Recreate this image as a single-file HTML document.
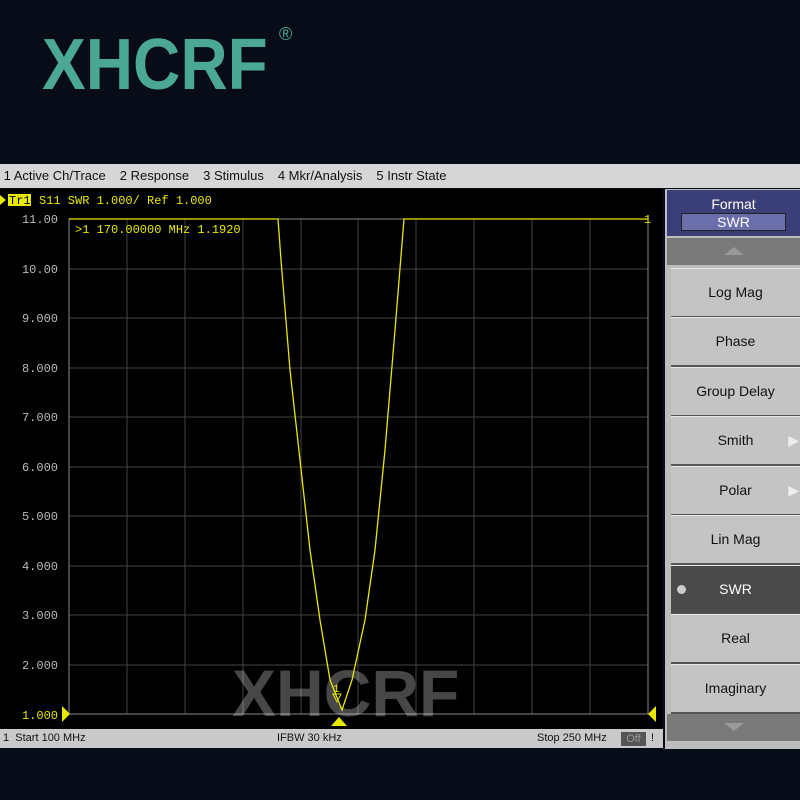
<!DOCTYPE html>
<html><head><style>
body{margin:0;width:800px;height:800px;background:#080c18;position:relative;overflow:hidden;font-family:"Liberation Sans",sans-serif}
.abs{position:absolute}
.logo{left:42px;top:22px;font-size:72px;font-weight:bold;color:#4aa894;transform:scaleX(.91);transform-origin:left top;line-height:86px}
.reg{left:279px;top:24px;font-size:18px;color:#4aa894}
.menu{left:0;top:164px;width:800px;height:24px;background:#d6d6d6;font-size:13px;color:#111;line-height:24px;white-space:nowrap}
.menu span{margin-right:14px}
.plot{left:0;top:189px;width:662px;height:540px;background:#000}
.status{left:0;top:729px;width:663px;height:19px;background:#c9c9c9;font-size:11px;line-height:19px;color:#111}
.panel{left:665px;top:189px;width:135px;height:560px;background:#bdbdbd}
.btn{position:absolute;left:6px;width:129px;height:47px;background:#c4c4c4;border-top:1px solid #e8e8e8;border-bottom:2px solid #555;font-size:14px;color:#111;text-align:center;line-height:47px}
.mono{font-family:"Liberation Mono",monospace}
</style></head><body>
<div class="abs logo">XHCRF</div>
<div class="abs reg">®</div>
<div class="abs menu">&nbsp;<span>1 Active Ch/Trace</span><span>2 Response</span><span>3 Stimulus</span><span>4 Mkr/Analysis</span><span>5 Instr State</span></div>
<div class="abs plot"></div>
<svg class="abs" style="left:0;top:189px" width="662" height="540" viewBox="0 189 662 540">
<g stroke="#444" stroke-width="1">
<line x1="69" y1="269" x2="648" y2="269"/><line x1="69" y1="318" x2="648" y2="318"/><line x1="69" y1="368" x2="648" y2="368"/><line x1="69" y1="417" x2="648" y2="417"/><line x1="69" y1="467" x2="648" y2="467"/><line x1="69" y1="516" x2="648" y2="516"/><line x1="69" y1="566" x2="648" y2="566"/><line x1="69" y1="615" x2="648" y2="615"/><line x1="69" y1="665" x2="648" y2="665"/>
<line x1="127" y1="219" x2="127" y2="714"/><line x1="185" y1="219" x2="185" y2="714"/><line x1="243" y1="219" x2="243" y2="714"/><line x1="301" y1="219" x2="301" y2="714"/><line x1="358" y1="219" x2="358" y2="714"/><line x1="416" y1="219" x2="416" y2="714"/><line x1="474" y1="219" x2="474" y2="714"/><line x1="532" y1="219" x2="532" y2="714"/><line x1="590" y1="219" x2="590" y2="714"/>
</g>
<rect x="69" y="219" width="579" height="495" fill="none" stroke="#888"/>
<text x="232" y="716" font-size="66" font-weight="bold" fill="#fff" fill-opacity=".28" font-family="Liberation Sans">XHCRF</text>
<polyline fill="none" stroke="#e8e800" stroke-width="1.3" points="69,219 278,219 281,260 290,370 300,460 310,550 320,620 330,680 342,710 352,680 365,620 375,550 385,450 395,330 404,219 648,219"/>
<g font-family="Liberation Mono" font-size="12" fill="#e8e800">
<text x="75" y="233">&gt;1  170.00000 MHz  1.1920</text>
<text x="644" y="223">1</text>
<text x="333" y="692" font-size="11">1</text>
</g>
<polygon points="333,694 341,694 337,702" fill="none" stroke="#e8e800"/>
<polygon points="62,706 70,714 62,722" fill="#e8e800"/>
<polygon points="656,706 648,714 656,722" fill="#e8e800"/>
<polygon points="331,726 339,717 347,726" fill="#e8e800"/>
<g font-family="Liberation Mono" font-size="12" fill="#bbb" text-anchor="end">
<text x="58" y="223">11.00</text><text x="58" y="273">10.00</text><text x="58" y="322">9.000</text><text x="58" y="372">8.000</text><text x="58" y="421">7.000</text><text x="58" y="471">6.000</text><text x="58" y="520">5.000</text><text x="58" y="570">4.000</text><text x="58" y="619">3.000</text><text x="58" y="669">2.000</text><text x="58" y="719" fill="#e8e800">1.000</text>
</g>
<polygon points="0,195 6,200 0,205" fill="#e8e800"/>
<rect x="8" y="194" width="23" height="12" fill="#e8e800"/>
<g font-family="Liberation Mono" font-size="12">
<text x="9" y="204" fill="#000">Tr1</text>
<text x="39" y="204" fill="#e8e800">S11  SWR 1.000/ Ref 1.000</text>
</g>
</svg>
<div class="abs status">&nbsp;1&nbsp;&nbsp;Start 100 MHz<span style="position:absolute;left:277px">IFBW 30 kHz</span><span style="position:absolute;left:537px">Stop 250 MHz</span><span style="position:absolute;left:621px;top:3px;width:25px;height:14px;background:#555;color:#999;line-height:14px;text-align:center">Off</span><span style="position:absolute;left:651px">!</span></div>
<div class="abs panel">
<div style="position:absolute;left:2px;top:1px;width:133px;height:46px;background:#3a3f78;color:#fff;font-size:14px;text-align:center">
<div style="margin-top:6px">Format</div>
<div style="margin:1px auto 0;width:103px;height:16px;background:#6a6eaa;border:1px solid #222;line-height:16px">SWR</div></div>
<div style="position:absolute;left:2px;top:49px;width:133px;height:27px;background:#7a7a7a"><div style="margin:9px auto;width:0;height:0;border-left:10px solid transparent;border-right:10px solid transparent;border-bottom:8px solid #999"></div></div>
<div class="btn" style="top:79px">Log Mag</div>
<div class="btn" style="top:128px">Phase</div>
<div class="btn" style="top:178px">Group Delay</div>
<div class="btn" style="top:227px">Smith<span style="position:absolute;right:1px;color:#eee">▶</span></div>
<div class="btn" style="top:277px">Polar<span style="position:absolute;right:1px;color:#eee">▶</span></div>
<div class="btn" style="top:326px">Lin Mag</div>
<div class="btn" style="top:376px;background:#4a4a4a;color:#fff">SWR<span style="position:absolute;left:6px;top:19px;width:9px;height:9px;border-radius:50%;background:#ccc"></span></div>
<div class="btn" style="top:425px">Real</div>
<div class="btn" style="top:475px">Imaginary</div>
<div style="position:absolute;left:2px;top:525px;width:133px;height:27px;background:#7a7a7a"><div style="margin:9px auto;width:0;height:0;border-left:10px solid transparent;border-right:10px solid transparent;border-top:8px solid #999"></div></div>
</div>
</body></html>
